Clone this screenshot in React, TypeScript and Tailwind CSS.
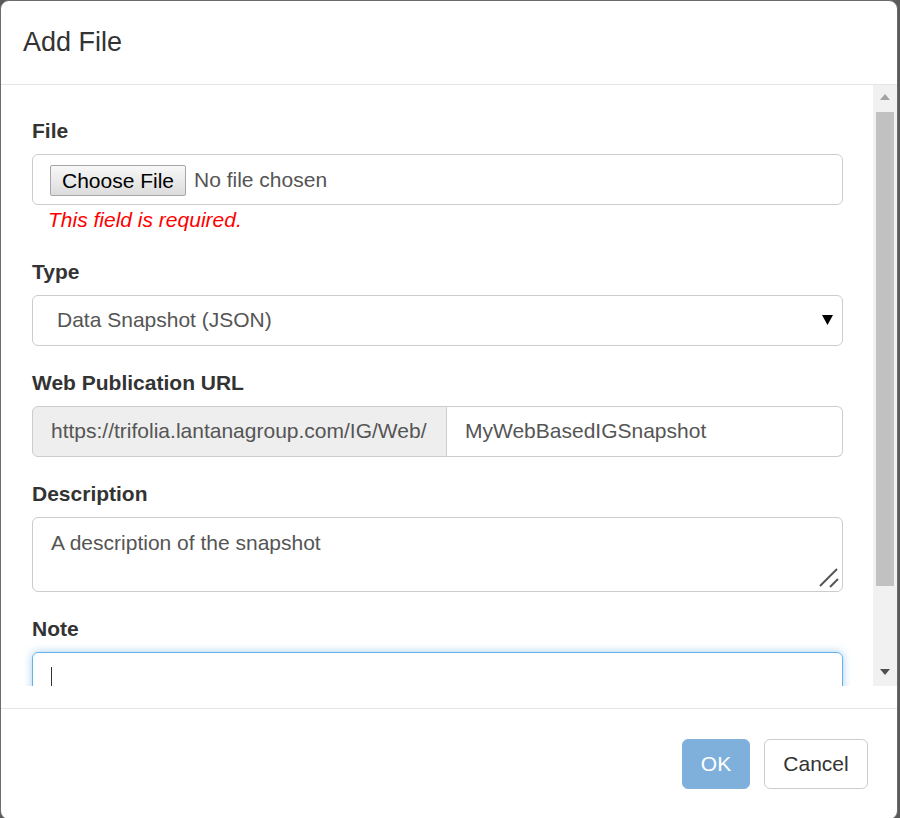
import { useState } from "react";

const Label = ({ children }: { children: React.ReactNode }) => (
  <label className="block text-[21px] leading-[30px] font-bold text-[#333] mb-[7.5px]">
    {children}
  </label>
);

const ScrollBar = () => (
  <div className="w-[24px] h-full bg-[#f1f1f1] flex flex-col items-center">
    <div className="h-[24px] w-full flex items-center justify-center">
      <svg width="10" height="6" viewBox="0 0 10 6">
        <path d="M0 6 L5 0 L10 6 Z" fill="#a3a3a3" />
      </svg>
    </div>
    <div className="w-[18px] h-[474px] mt-[3px] bg-[#c1c1c1]" />
    <div className="flex-1" />
    <div className="h-[24px] w-full flex items-center justify-center mb-[2px]">
      <svg width="10" height="6" viewBox="0 0 10 6">
        <path d="M0 0 L10 0 L5 6 Z" fill="#505050" />
      </svg>
    </div>
  </div>
);

export default function App() {
  const [type] = useState("Data Snapshot (JSON)");

  return (
    <div
      className="w-[900px] h-[818px] bg-[#5a5a5a] overflow-hidden"
      style={{ fontFamily: '"Liberation Sans", Arial, sans-serif' }}
    >
      <div className="w-[898px] bg-white border border-[#6b6b6b] rounded-[9px] overflow-hidden">
        {/* header */}
        <div className="h-[84px] px-[22px] flex items-center border-b border-[#e5e5e5]">
          <h4 className="text-[27px] leading-[38px] text-[#333] pb-[2px]">Add File</h4>
        </div>

        {/* body */}
        <div className="h-[601px] flex">
          <div className="flex-1 overflow-hidden pl-[31px] pr-[30px] pt-[31px]">
            <div className="mb-[22.5px]">
              <Label>File</Label>
              <div className="h-[51px] border border-[#ccc] rounded-[6px] flex items-center pl-[17px] pt-[2px]">
                <button className="h-[31px] w-[136px] border border-[#a6a6a6] rounded-[2px] bg-gradient-to-b from-[#f8f8f8] to-[#dcdcdc] text-[21px] leading-[29px] text-black">
                  Choose File
                </button>
                <span className="ml-[8px] text-[21px] text-[#555]">No file chosen</span>
              </div>
              <div className="pl-[16px] text-[21px] leading-[30px] italic text-[#ff0000]">
                This field is required.
              </div>
            </div>

            <div className="mb-[22.5px]">
              <Label>Type</Label>
              <div className="h-[51px] border border-[#ccc] rounded-[6px] flex items-center pl-[24px] pr-[9px] text-[21px] text-[#555]">
                <span className="flex-1">{type}</span>
                <svg width="11" height="10" viewBox="0 0 11 10">
                  <path d="M0 0 L11 0 L5.5 10 Z" fill="#000" />
                </svg>
              </div>
            </div>

            <div className="mb-[22.5px]">
              <Label>Web Publication URL</Label>
              <div className="h-[51px] flex text-[21px] text-[#555]">
                <div className="w-[415px] bg-[#eee] border border-[#ccc] rounded-l-[6px] flex items-center pl-[18px]">
                  https://trifolia.lantanagroup.com/IG/Web/
                </div>
                <div className="flex-1 border border-l-0 border-[#ccc] rounded-r-[6px] flex items-center pl-[18px]">
                  MyWebBasedIGSnapshot
                </div>
              </div>
            </div>

            <div className="mb-[22.5px]">
              <Label>Description</Label>
              <div className="relative h-[75px] border border-[#ccc] rounded-[6px] pl-[18px] pt-[10px] text-[21px] leading-[30px] text-[#555]">
                A description of the snapshot
                <svg className="absolute right-[3px] bottom-[3px]" width="20" height="20" viewBox="0 0 20 20">
                  <path d="M1 18 L18 1" stroke="#555" strokeWidth="2" />
                  <path d="M11 19 L19 11" stroke="#555" strokeWidth="2" />
                </svg>
              </div>
            </div>

            <div>
              <Label>Note</Label>
              <div className="h-[51px] border border-[#66afe9] rounded-[6px] flex items-center pl-[18px] shadow-[0_0_8px_rgba(102,175,233,0.6)]">
                <span className="w-px h-[21px] bg-[#333]" />
              </div>
            </div>
          </div>
          <ScrollBar />
        </div>

        {/* footer */}
        <div className="mt-[22px] border-t border-[#e5e5e5] pt-[30px] pb-[30px] pr-[29px] flex justify-end gap-[14px]">
          <button className="h-[50px] w-[68px] rounded-[6px] bg-[#7fb0dc] border border-[#7fb0dc] text-white text-[21px]">
            OK
          </button>
          <button className="h-[50px] w-[104px] rounded-[6px] bg-white border border-[#ccc] text-[#333] text-[21px]">
            Cancel
          </button>
        </div>
      </div>
    </div>
  );
}
